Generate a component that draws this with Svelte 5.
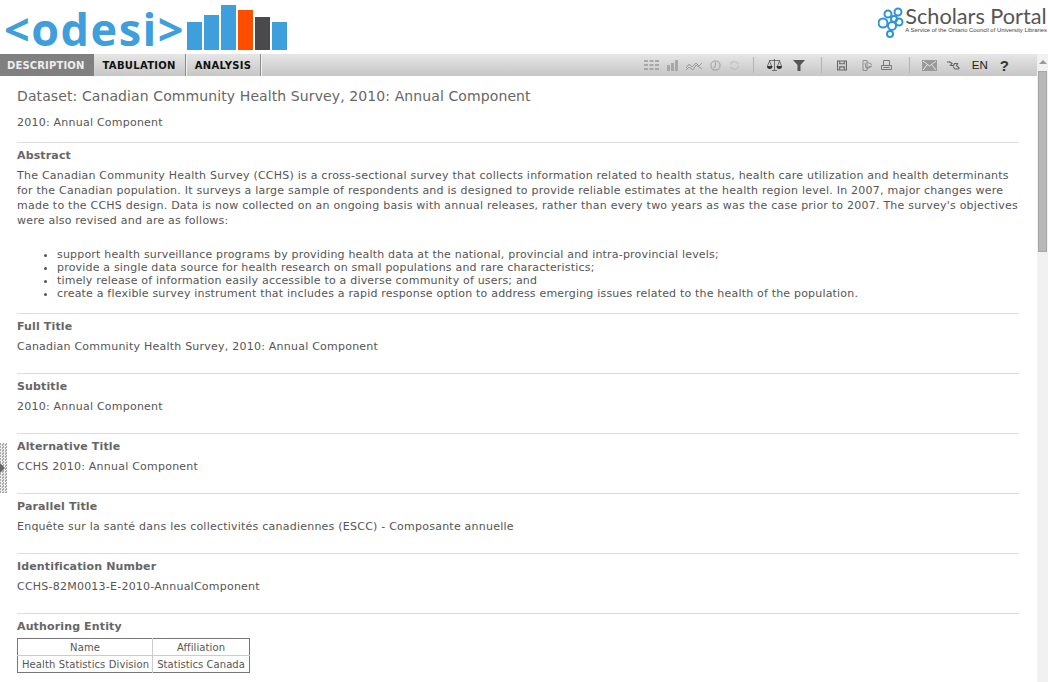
<script lang="ts">
  // Study description page: logo header, tab bar with tool icons, metadata list
  const tabs = ['Description', 'Tabulation', 'Analysis'];
  const bars = [
    { h: 28, c: '#3f9fdd' },
    { h: 35, c: '#3f9fdd' },
    { h: 45, c: '#3f9fdd' },
    { h: 40, c: '#ff4d00' },
    { h: 33, c: '#4a4a4c' },
    { h: 28, c: '#3f9fdd' }
  ];
  const fields = [
    { label: 'Full Title', value: 'Canadian Community Health Survey, 2010: Annual Component' },
    { label: 'Subtitle', value: '2010: Annual Component' },
    { label: 'Alternative Title', value: 'CCHS 2010: Annual Component' },
    { label: 'Parallel Title', value: 'Enquête sur la santé dans les collectivités canadiennes (ESCC) - Composante annuelle' },
    { label: 'Identification Number', value: 'CCHS-82M0013-E-2010-AnnualComponent' }
  ];
  const bullets = [
    'support health surveillance programs by providing health data at the national, provincial and intra-provincial levels;',
    'provide a single data source for health research on small populations and rare characteristics;',
    'timely release of information easily accessible to a diverse community of users; and',
    'create a flexible survey instrument that includes a rapid response option to address emerging issues related to the health of the population.'
  ];
</script>

<div class="page">
  <header class="top">
    <div class="logo">
      <span class="logo-text">&lt;odesi&gt;</span>
      <div class="logo-bars">
        {#each bars as b}
          <span style="height: {b.h}px; background: {b.c}"></span>
        {/each}
      </div>
    </div>
    <div class="sp">
      <svg width="26" height="31" viewBox="0 0 26 31" fill="none" stroke="#2f94d6" stroke-width="2">
        <circle cx="10" cy="7" r="3.500" /><circle cx="20" cy="5" r="3.500" /><circle cx="16" cy="12" r="3" />
        <circle cx="21" cy="15" r="3.500" /><circle cx="5" cy="16" r="4.500" /><circle cx="14" cy="19" r="4" />
        <circle cx="12" cy="27" r="3" />
      </svg>
      <div class="sp-text">
        <div class="sp-name">Scholars Portal</div>
        <div class="sp-sub">A Service of the Ontario Council of University Libraries</div>
      </div>
    </div>
  </header>

  <div class="body-row">
    <div class="main-col">
      <nav class="toolbar">
        <div class="tabs">
          {#each tabs as t, i}
            <button class="tab" class:active={i === 0}>{t}</button>
          {/each}
        </div>
        <div class="tools">
          <svg class="ic dim" width="15" height="10" viewBox="0 0 15 10" fill="#999"><path d="M0 0h4v2H0zM5.500 0h4v2h-4zM11 0h4v2h-4zM0 4h4v2H0zM5.500 4h4v2h-4zM11 4h4v2h-4zM0 8h4v2H0zM5.500 8h4v2h-4zM11 8h4v2h-4z" /></svg>
          <svg class="ic dim" width="11" height="11" viewBox="0 0 11 11" fill="#999"><path d="M0 5h3v6H0zM4 3h3v8H4zM8 0h3v11H8z" /></svg>
          <svg class="ic dim" width="16" height="11" viewBox="0 0 16 11" fill="none" stroke="#888"><path d="M0 8l3-4 3 3 4-4 3 3 3-3M0 10l3-3 4 3 3-5 6 4" /></svg>
          <svg class="ic dim" width="11" height="11" viewBox="0 0 12 12" fill="none" stroke="#999" stroke-width="1.300"><circle cx="6" cy="6" r="5" /><path d="M6 2v4l-2 3" /></svg>
          <svg class="ic dim" width="11" height="11" viewBox="0 0 11 11" fill="none" stroke="#bbb" stroke-width="1.300"><path d="M1.500 5a4 4 0 0 1 7-2l1 1M9.500 6a4 4 0 0 1-7 2l-1-1" /></svg>
          <i class="sep"></i>
          <svg class="ic" width="15" height="12" viewBox="0 0 15 12"><path d="M7.500 0v11M5 11.500h5M2 1.500h11M2.500 2L.5 7M2.500 2l2 5M12.500 2l-2 5M12.500 2l2 5" fill="none" stroke="#555" stroke-width="0.800" /><path d="M0 7h5.500a2.750 3 0 0 1-5.500 0zM9.500 7H15a2.750 3 0 0 1-5.500 0z" fill="#333" /></svg>
          <svg class="ic funnel" width="12" height="11" viewBox="0 0 12 11" fill="#555"><path d="M0 0h12L7.500 5v6h-3V5z" /></svg>
          <i class="sep mid"></i>
          <svg class="ic" width="10" height="11" viewBox="0 0 11 11" fill="none" stroke="#666" stroke-width="1.200"><path d="M.6.6h9.800v9.800H.6zM3 .6v3h5v-3M3 10.400V7h5v3.400" /></svg>
          <svg class="ic dim pdf" width="11" height="11" viewBox="0 0 11 11" fill="none" stroke="#777"><path d="M1 .5h4v10H1zM5 2l5 2.500M5 9l5-3M3 3l1 5 5-2" /></svg>
          <svg class="ic" width="11" height="10" viewBox="0 0 11 10" fill="none" stroke="#777"><path d="M2.500.5h6v5h-6zM.5 5.500h10v4H.5zM2.500 7.500h6" /></svg>
          <i class="sep last"></i>
          <svg class="ic" width="15" height="11" viewBox="0 0 15 11"><path d="M0 0h15v11H0z" fill="#999" /><path d="M1 1l6.500 5L14 1M1 10l4-5M14 10l-4-5" fill="none" stroke="#e4e4e4" /></svg>
          <svg class="ic net" width="14" height="9" viewBox="0 0 14 9" fill="none" stroke="#666" stroke-width="1.200"><path d="M0 1h3l2 1.500M2 .5l3 2-1.500 2h3l1-2h3l-1 2 3 3M6 5.500l2 2.500h4" /></svg>
          <span class="lang">EN</span>
          <span class="help">?</span>
        </div>
      </nav>

      <div class="handle"><b></b></div>

      <main class="content">
        <h1>Dataset: Canadian Community Health Survey, 2010: Annual Component</h1>
        <p class="sub">2010: Annual Component</p>

        <section class="abstract">
          <h2>Abstract</h2>
          <p>The Canadian Community Health Survey (CCHS) is a cross-sectional survey that collects information related to health status, health care utilization and health determinants for the Canadian population. It surveys a large sample of respondents and is designed to provide reliable estimates at the health region level. In 2007, major changes were made to the CCHS design. Data is now collected on an ongoing basis with annual releases, rather than every two years as was the case prior to 2007. The survey's objectives were also revised and are as follows:</p>
          <ul>
            {#each bullets as b}
              <li>{b}</li>
            {/each}
          </ul>
        </section>

        {#each fields as f}
          <section class="field">
            <h2>{f.label}</h2>
            <p>{f.value}</p>
          </section>
        {/each}

        <section class="field">
          <h2>Authoring Entity</h2>
          <table>
            <thead>
              <tr><th>Name</th><th>Affiliation</th></tr>
            </thead>
            <tbody>
              <tr><td>Health Statistics Division</td><td>Statistics Canada</td></tr>
            </tbody>
          </table>
        </section>
      </main>
    </div>

    <aside class="scrollbar">
      <span class="arrow"></span>
      <span class="thumb"></span>
    </aside>
  </div>
</div>

<style>
  :global(body) {
    margin: 0;
    background: #fff;
  }

  .page {
    width: 1048px;
    height: 682px;
    overflow: hidden;
    font-family: "DejaVu Sans", Verdana, sans-serif;
    font-size: 11px;
    letter-spacing: 0.23px;
    color: #555;
  }

  .top {
    height: 54px;
    display: flex;
    justify-content: space-between;
    letter-spacing: 0;
  }

  .logo {
    display: flex;
    align-items: flex-end;
    padding-left: 4px;
  }

  .logo-text {
    font-family: "Open Sans", sans-serif;
    font-weight: 700;
    font-size: 45px;
    line-height: 50px;
    letter-spacing: 1.500px;
    color: #3f9fdd;
  }

  .logo-bars {
    display: flex;
    align-items: flex-end;
    gap: 2px;
    margin: 0 0 4px 2px;
  }

  .logo-bars span {
    width: 15px;
  }

  .sp {
    display: flex;
    align-items: flex-start;
    gap: 1px;
    padding: 6px 0 0 0;
    margin-right: 1px;
  }

  .sp svg {
    margin-top: 1px;
  }

  .sp-name {
    font-family: "Lato", sans-serif;
    font-size: 21.700px;
    line-height: 20px;
    color: #555;
  }

  .sp-sub {
    font-family: "Liberation Sans", sans-serif;
    font-size: 5.900px;
    line-height: 8px;
    color: #444;
    white-space: nowrap;
  }

  .body-row {
    display: flex;
    height: 628px;
  }

  .main-col {
    flex: 1;
    min-width: 0;
    position: relative;
  }

  .toolbar {
    height: 22px;
    display: flex;
    justify-content: space-between;
    background: linear-gradient(#e6e6e6, #c6c6c6);
    letter-spacing: 0;
  }

  .tabs {
    display: flex;
  }

  .tab {
    height: 22px;
    padding: 0 9px 0 8px;
    border: 0;
    border-right: 1px solid #8a8a8a;
    margin-right: 1px;
    background: transparent;
    box-shadow: 1px 0 0 #f2f2f2;
    font-family: "DejaVu Sans", Verdana, sans-serif;
    font-weight: 700;
    font-size: 10px;
    letter-spacing: 0.3px;
    text-transform: uppercase;
    color: #111;
  }

  .tab.active {
    background: #808080;
    color: #eee;
    border-right: 0;
    padding: 0 9px 0 7px;
    margin-right: 1px;
    letter-spacing: 0.15px;
    box-shadow: none;
  }

  .tools {
    display: flex;
    align-items: center;
    gap: 8px;
    padding-right: 28px;
  }

  .ic.dim {
    opacity: 0.75;
  }

  .funnel {
    margin-left: 3px;
  }

  .pdf {
    margin-left: 7px;
  }

  .net {
    margin-left: 2px;
  }

  .sep {
    width: 1px;
    height: 16px;
    background: #b4b4b4;
    margin: 0 5px;
  }

  .sep.mid {
    margin: 0 7px 0 8px;
  }

  .sep.last {
    margin: 0 4px 0 9px;
  }

  .lang {
    font-family: "Liberation Sans", sans-serif;
    font-size: 11.500px;
    color: #222;
    margin-left: 3px;
  }

  .help {
    font-family: "Liberation Sans", sans-serif;
    font-weight: 700;
    font-size: 15px;
    color: #333;
    margin-left: 4px;
  }

  .handle {
    position: absolute;
    left: 0;
    top: 389px;
    width: 7px;
    height: 50px;
    background: repeating-conic-gradient(#f0f0f0 0 25%, #a8a8a8 0 50%) 0 0 / 3px 3px;
    display: flex;
    align-items: center;
  }

  .handle b {
    border-left: 5px solid #666;
    border-top: 5px solid transparent;
    border-bottom: 5px solid transparent;
  }

  .content {
    padding: 0 18px 0 17px;
  }

  h1 {
    margin: 11px 0 0;
    font-size: 14px;
    line-height: 18px;
    font-weight: 400;
    letter-spacing: 0.1px;
    color: #666;
  }

  p {
    margin: 0;
    line-height: 13px;
  }

  .sub {
    margin-top: 11px;
    padding-bottom: 13px;
  }

  section {
    border-top: 1px solid #ddd;
  }

  h2 {
    margin: 0;
    padding: 6px 0;
    font-size: 11px;
    line-height: 13px;
    font-weight: 700;
    letter-spacing: 0.14px;
    color: #666;
  }

  .abstract {
    padding-bottom: 13px;
  }

  .abstract p {
    line-height: 15px;
  }

  ul {
    margin: 20px 0 0;
    padding-left: 40px;
    letter-spacing: 0.19px;
  }

  li {
    line-height: 13px;
  }

  .field {
    height: 59px;
  }

  .field h2 {
    padding-bottom: 7px;
  }

  table {
    border-collapse: collapse;
    border: 1px solid #777;
    margin-top: -2px;
    font-size: 10px;
    letter-spacing: 0.1px;
    color: #555;
  }

  th,
  td {
    padding: 0 4px;
    height: 16px;
    font-weight: 400;
    text-align: center;
  }

  th + th,
  td + td {
    border-left: 1px solid #ccc;
  }

  td:first-child {
    padding-right: 3px;
  }

  td + td {
    letter-spacing: 0.05px;
  }

  tbody td {
    border-top: 1px solid #ccc;
  }

  .scrollbar {
    width: 11px;
    flex: none;
    background: #f1f1f1;
    display: flex;
    flex-direction: column;
    align-items: center;
  }

  .arrow {
    margin-top: 6px;
    border-bottom: 4px solid #999;
    border-left: 4px solid transparent;
    border-right: 4px solid transparent;
  }

  .thumb {
    margin-top: 7px;
    width: 9px;
    height: 181px;
    background: #b8b8b8;
    border: 1px solid #a6a6a6;
    box-sizing: border-box;
  }
</style>
